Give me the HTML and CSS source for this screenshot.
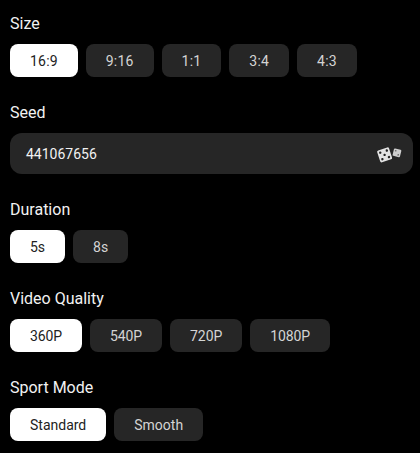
FILE: index.html
```html
<!DOCTYPE html>
<html>

<head>
  <meta charset="utf-8" />
  <title>Video settings</title>
  <link rel="stylesheet" href="styles.css">
</head>

<body>
  <div class="panel">
    <div class="group">
      <div class="label">Size</div>
      <div class="options">
        <button class="option ratio active">16:9</button>
        <button class="option ratio">9:16</button>
        <button class="option ratio">1:1</button>
        <button class="option ratio">3:4</button>
        <button class="option ratio">4:3</button>
      </div>
    </div>

    <div class="group">
      <div class="label">Seed</div>
      <div class="seed">
        <span class="seed-value">441067656</span>
        <svg class="dice" width="26" height="18" viewBox="0 0 26 18">
          <g transform="translate(-0.7 0.7) rotate(-18 9 9)">
            <rect x="3" y="3" width="12.5" height="12.5" rx="1.5" fill="#e4e4e4" />
            <circle cx="5.8" cy="5.8" r="1.2" fill="#222" />
            <circle cx="12.7" cy="5.8" r="1.2" fill="#222" />
            <circle cx="9.25" cy="9.25" r="1.2" fill="#222" />
            <circle cx="5.8" cy="12.7" r="1.2" fill="#222" />
            <circle cx="12.7" cy="12.7" r="1.2" fill="#222" />
          </g>
          <g transform="translate(0.8 0) rotate(14 20 8)">
            <rect x="16.3" y="4" width="7.6" height="7.6" rx="1" fill="#cfcfcf" />
            <circle cx="18.4" cy="6.1" r="0.8" fill="#666" />
            <circle cx="21.8" cy="9.5" r="0.8" fill="#666" />
          </g>
        </svg>
      </div>
    </div>

    <div class="group">
      <div class="label">Duration</div>
      <div class="options">
        <button class="option active">5s</button>
        <button class="option">8s</button>
      </div>
    </div>

    <div class="group">
      <div class="label">Video Quality</div>
      <div class="options">
        <button class="option quality active">360P</button>
        <button class="option quality">540P</button>
        <button class="option quality">720P</button>
        <button class="option quality">1080P</button>
      </div>
    </div>

    <div class="group">
      <div class="label">Sport Mode</div>
      <div class="options">
        <button class="option active">Standard</button>
        <button class="option">Smooth</button>
      </div>
    </div>
  </div>
</body>

</html>
```

FILE: styles.css
```css
body {
  margin: 0;
  padding: 0;
  background-color: black;
  font-family: Roboto, "Liberation Sans", sans-serif;
}

.panel {
  display: flex;
  flex-direction: column;
  gap: 26px;
  padding: 14px 7px 0 10px;
}

.label {
  height: 20px;
  margin-bottom: 10px;
  color: #f2f2f2;
  font-size: 16px;
  line-height: 20px;
}

.options {
  display: flex;
  gap: 8px;
}

.option {
  height: 33px;
  padding: 0 20px;
  border: 0;
  border-radius: 8px;
  background-color: #262626;
  color: #d4d4d4;
  font-family: inherit;
  font-size: 14px;
}

.option.ratio {
  letter-spacing: 0.2px;
}

.option.quality {
  letter-spacing: -0.1px;
}

.option.active {
  background-color: white;
  color: #222;
}

.seed {
  display: flex;
  align-items: center;
  justify-content: space-between;
  height: 41px;
  padding: 0 11px 0 16px;
  border-radius: 12px;
  background-color: #262626;
}

.seed-value {
  color: #f2f2f2;
  font-size: 14px;
}
```
